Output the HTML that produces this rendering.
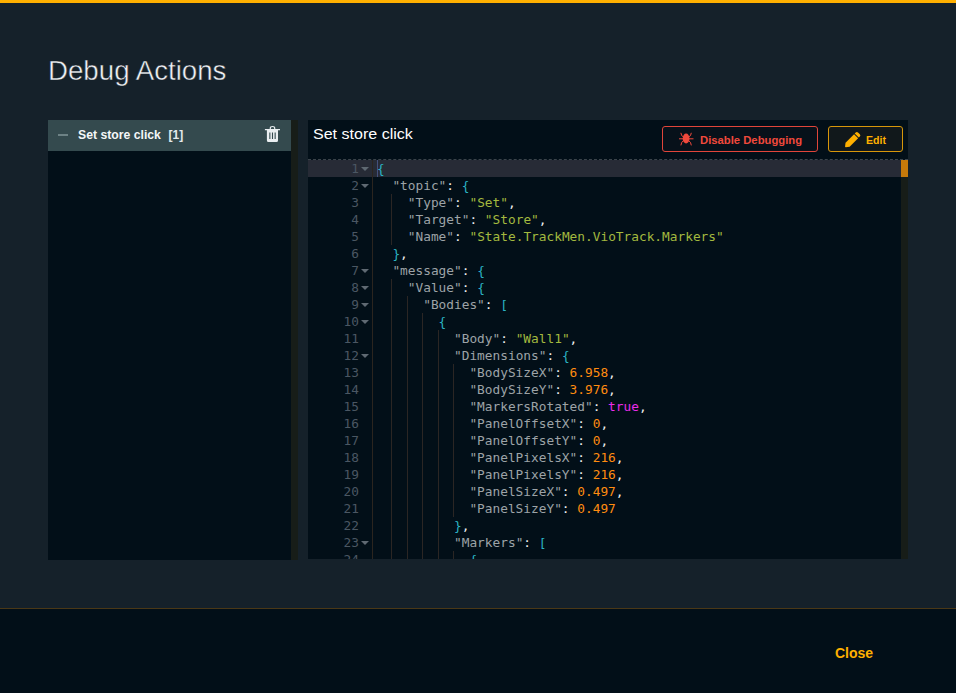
<!DOCTYPE html>
<html lang="en">
<head>
<meta charset="utf-8">
<title>Debug Actions</title>
<style>
*{box-sizing:border-box;margin:0;padding:0}
html,body{width:956px;height:693px;overflow:hidden}
body{background:#15212a;font-family:"Liberation Sans",sans-serif;color:#fff;position:relative;--cw:7.7px}
.topbar{position:absolute;left:0;top:0;width:956px;height:3px;background:#ffb000}
h1{position:absolute;left:48px;top:53px;font-weight:400;font-size:27.5px;line-height:36px;color:#eef1f4;white-space:nowrap;transform-origin:0 0;transform:scaleX(1.006);-webkit-text-stroke:0.45px #15212a}
.left{position:absolute;left:48px;top:120px;width:250px;height:440px;background:#020f18}
.left .track{position:absolute;right:0;top:0;width:7px;height:440px;background:#171d18}
.item{position:absolute;left:0;top:0;width:243px;height:31px;background:#344a4e}
.item .minus{position:absolute;left:10px;top:14px;width:10px;height:2px;background:#6d8285}
.item .lbl{position:absolute;left:29.500px;top:7px;font-weight:700;font-size:13px;line-height:16px;color:#f4f7f8;white-space:nowrap;transform-origin:0 0;transform:scaleX(0.94)}
.item .cnt{position:absolute;left:120.500px;top:7px;font-weight:700;font-size:12px;line-height:16px;color:#e4eaec;white-space:nowrap}
.item svg{position:absolute;left:216px;top:5px}
.right{position:absolute;left:308px;top:120px;width:600px;height:439px;background:#020f18;overflow:hidden}
.right .ttl{position:absolute;left:5px;top:3.500px;font-size:15.500px;line-height:20px;color:#fff;white-space:nowrap;transform-origin:0 0;transform:scaleX(1.035)}
.btn{position:absolute;top:6px;height:26px;border-radius:3px;font-weight:700;font-size:11.500px;line-height:24px;white-space:nowrap}
.btn.red{left:354px;width:156px;border:1px solid #e0453a;color:#f0493c;background:#07111a}
.btn.yel{left:520px;width:75px;border:1px solid #d6960a;color:#ffb000;background:#11181b}
.btn span{position:absolute;top:1px;transform-origin:0 0}
.btn svg{position:absolute}
.editor{position:absolute;left:0;top:39px;width:600px;height:401px;border-top:1px dashed #3b444b;font-family:"DejaVu Sans Mono","Liberation Mono",monospace;font-size:12.8px;overflow:hidden}
.gline{position:absolute;left:64px;top:0;width:1px;height:401px;background:#2b251f}
.vtrack{position:absolute;left:593px;top:0;width:7px;height:401px;background:#171d18}
.vthumb{position:absolute;left:593px;top:0;width:7px;height:17px;background:#c77a0a}
.row{position:absolute;left:0;width:593px;height:17px;line-height:17px;white-space:pre}
.row.act{background:#272b36}
.gut{position:absolute;left:0;top:0;width:64px;height:17px;color:#4b5763}
.ln{position:absolute;right:13px;top:0}
.fold{position:absolute;left:53px;top:7px;width:0;height:0;border-left:4.5px solid transparent;border-right:4.5px solid transparent;border-top:4.5px solid #5f6972}
.code{position:absolute;left:69px;top:0;height:17px;width:524px}
.g{position:absolute;top:0;width:1px;height:17px;background:#2b2624;margin-left:-1px}
.tx{position:absolute;left:0;top:0}
.k{color:#9da3a7}
.t{color:#eef0f1}
.s{color:#a3b93f}
.n{color:#ff8c10}
.b{color:#ea2cea}
.p{color:#2bb3c4}
.cursor{position:absolute;left:69px;top:0;width:1px;height:17px;background:#44507c}
.footer{position:absolute;left:0;top:608px;width:956px;height:85px;background:#020f18;border-top:1px solid #4a3816}
.close{position:absolute;left:835px;top:36px;font-weight:700;font-size:14px;line-height:16px;color:#ffb000}
</style>
</head>
<body>
<div class="topbar"></div>
<h1>Debug Actions</h1>
<div class="left">
  <div class="item">
    <div class="minus"></div>
    <div class="lbl">Set store click</div>
    <div class="cnt">[1]</div>
    <svg width="17" height="18" viewBox="0 0 17 18"><path fill="#e9eef0" fill-rule="evenodd" d="M0.900 3.900h15.100v1.400H0.900zM5.700 3.900V3.100a2.800 2.200 0 0 1 5.600 0v0.800h-1.200V3.300a1.600 1.200 0 0 0-3.200 0v0.600zM2.900 5.300h11.100v10.200a1.500 1.500 0 0 1-1.500 1.500H4.400a1.500 1.500 0 0 1-1.500-1.500zM5.300 7.600h1.100v6.300h-1.100zM7.950 7.600h1.100v6.300h-1.100zM10.600 7.600h1.100v6.300h-1.100z"/></svg>
  </div>
  <div class="track"></div>
</div>
<div class="right">
  <div class="ttl">Set store click</div>
  <div class="btn red"><svg width="15" height="14" viewBox="0 0 15 14" style="left:16px;top:5px"><ellipse cx="7.100" cy="6.500" rx="3.400" ry="5.100" fill="#f0493c"/><path d="M4.600 5l-1.900-1.400-0.700-2.400M9.600 5l1.900-1.400 0.700-2.400M0.100 6.800h14M4.600 8.600l-1.900 1.800-0.700 2.600M9.600 8.600l1.900 1.800 0.700 2.600" stroke="#f0493c" stroke-width="1" fill="none" stroke-linecap="round" stroke-linejoin="round"/></svg><span style="left:37px;transform:scaleX(0.98)">Disable Debugging</span></div>
  <div class="btn yel"><svg width="17" height="17" viewBox="0 0 17 17" style="left:16px;top:5px;overflow:visible"><g transform="translate(0.200 15.100) rotate(-45)" fill="#ffb000"><path d="M0.300 0.500Q-0.200 0 0.300-0.500L3.400-2.900H15.400V2.900H3.400Z"/><path d="M16.300-2.900H17.800a1.600 1.600 0 0 1 1.600 1.600V1.300a1.600 1.600 0 0 1-1.600 1.600H16.300Z"/></g></svg><span style="left:36.500px;transform:scaleX(0.92)">Edit</span></div>
  <div class="editor">
<div style="top:0px" class="row act"><div class="gut"><span class="ln">1</span><b class="fold"></b></div><div class="code"><span class="tx" style="margin-left:calc(var(--cw) * 0)"><span class="p">{</span></span></div></div>
<div style="top:17px" class="row"><div class="gut"><span class="ln">2</span><b class="fold"></b></div><div class="code"><span class="tx" style="margin-left:calc(var(--cw) * 2)"><span class="k">"topic"</span><span class="t">: </span><span class="p">{</span></span></div></div>
<div style="top:34px" class="row"><div class="gut"><span class="ln">3</span></div><div class="code"><i class="g" style="left:calc(var(--cw) * 2)"></i><span class="tx" style="margin-left:calc(var(--cw) * 4)"><span class="k">"Type"</span><span class="t">: </span><span class="s">"Set"</span><span class="t">,</span></span></div></div>
<div style="top:51px" class="row"><div class="gut"><span class="ln">4</span></div><div class="code"><i class="g" style="left:calc(var(--cw) * 2)"></i><span class="tx" style="margin-left:calc(var(--cw) * 4)"><span class="k">"Target"</span><span class="t">: </span><span class="s">"Store"</span><span class="t">,</span></span></div></div>
<div style="top:68px" class="row"><div class="gut"><span class="ln">5</span></div><div class="code"><i class="g" style="left:calc(var(--cw) * 2)"></i><span class="tx" style="margin-left:calc(var(--cw) * 4)"><span class="k">"Name"</span><span class="t">: </span><span class="s">"State.TrackMen.VioTrack.Markers"</span></span></div></div>
<div style="top:85px" class="row"><div class="gut"><span class="ln">6</span></div><div class="code"><span class="tx" style="margin-left:calc(var(--cw) * 2)"><span class="p">}</span><span class="t">,</span></span></div></div>
<div style="top:102px" class="row"><div class="gut"><span class="ln">7</span><b class="fold"></b></div><div class="code"><span class="tx" style="margin-left:calc(var(--cw) * 2)"><span class="k">"message"</span><span class="t">: </span><span class="p">{</span></span></div></div>
<div style="top:119px" class="row"><div class="gut"><span class="ln">8</span><b class="fold"></b></div><div class="code"><i class="g" style="left:calc(var(--cw) * 2)"></i><span class="tx" style="margin-left:calc(var(--cw) * 4)"><span class="k">"Value"</span><span class="t">: </span><span class="p">{</span></span></div></div>
<div style="top:136px" class="row"><div class="gut"><span class="ln">9</span><b class="fold"></b></div><div class="code"><i class="g" style="left:calc(var(--cw) * 2)"></i><i class="g" style="left:calc(var(--cw) * 4)"></i><span class="tx" style="margin-left:calc(var(--cw) * 6)"><span class="k">"Bodies"</span><span class="t">: </span><span class="p">[</span></span></div></div>
<div style="top:153px" class="row"><div class="gut"><span class="ln">10</span><b class="fold"></b></div><div class="code"><i class="g" style="left:calc(var(--cw) * 2)"></i><i class="g" style="left:calc(var(--cw) * 4)"></i><i class="g" style="left:calc(var(--cw) * 6)"></i><span class="tx" style="margin-left:calc(var(--cw) * 8)"><span class="p">{</span></span></div></div>
<div style="top:170px" class="row"><div class="gut"><span class="ln">11</span></div><div class="code"><i class="g" style="left:calc(var(--cw) * 2)"></i><i class="g" style="left:calc(var(--cw) * 4)"></i><i class="g" style="left:calc(var(--cw) * 6)"></i><i class="g" style="left:calc(var(--cw) * 8)"></i><span class="tx" style="margin-left:calc(var(--cw) * 10)"><span class="k">"Body"</span><span class="t">: </span><span class="s">"Wall1"</span><span class="t">,</span></span></div></div>
<div style="top:187px" class="row"><div class="gut"><span class="ln">12</span><b class="fold"></b></div><div class="code"><i class="g" style="left:calc(var(--cw) * 2)"></i><i class="g" style="left:calc(var(--cw) * 4)"></i><i class="g" style="left:calc(var(--cw) * 6)"></i><i class="g" style="left:calc(var(--cw) * 8)"></i><span class="tx" style="margin-left:calc(var(--cw) * 10)"><span class="k">"Dimensions"</span><span class="t">: </span><span class="p">{</span></span></div></div>
<div style="top:204px" class="row"><div class="gut"><span class="ln">13</span></div><div class="code"><i class="g" style="left:calc(var(--cw) * 2)"></i><i class="g" style="left:calc(var(--cw) * 4)"></i><i class="g" style="left:calc(var(--cw) * 6)"></i><i class="g" style="left:calc(var(--cw) * 8)"></i><i class="g" style="left:calc(var(--cw) * 10)"></i><span class="tx" style="margin-left:calc(var(--cw) * 12)"><span class="k">"BodySizeX"</span><span class="t">: </span><span class="n">6.958</span><span class="t">,</span></span></div></div>
<div style="top:221px" class="row"><div class="gut"><span class="ln">14</span></div><div class="code"><i class="g" style="left:calc(var(--cw) * 2)"></i><i class="g" style="left:calc(var(--cw) * 4)"></i><i class="g" style="left:calc(var(--cw) * 6)"></i><i class="g" style="left:calc(var(--cw) * 8)"></i><i class="g" style="left:calc(var(--cw) * 10)"></i><span class="tx" style="margin-left:calc(var(--cw) * 12)"><span class="k">"BodySizeY"</span><span class="t">: </span><span class="n">3.976</span><span class="t">,</span></span></div></div>
<div style="top:238px" class="row"><div class="gut"><span class="ln">15</span></div><div class="code"><i class="g" style="left:calc(var(--cw) * 2)"></i><i class="g" style="left:calc(var(--cw) * 4)"></i><i class="g" style="left:calc(var(--cw) * 6)"></i><i class="g" style="left:calc(var(--cw) * 8)"></i><i class="g" style="left:calc(var(--cw) * 10)"></i><span class="tx" style="margin-left:calc(var(--cw) * 12)"><span class="k">"MarkersRotated"</span><span class="t">: </span><span class="b">true</span><span class="t">,</span></span></div></div>
<div style="top:255px" class="row"><div class="gut"><span class="ln">16</span></div><div class="code"><i class="g" style="left:calc(var(--cw) * 2)"></i><i class="g" style="left:calc(var(--cw) * 4)"></i><i class="g" style="left:calc(var(--cw) * 6)"></i><i class="g" style="left:calc(var(--cw) * 8)"></i><i class="g" style="left:calc(var(--cw) * 10)"></i><span class="tx" style="margin-left:calc(var(--cw) * 12)"><span class="k">"PanelOffsetX"</span><span class="t">: </span><span class="n">0</span><span class="t">,</span></span></div></div>
<div style="top:272px" class="row"><div class="gut"><span class="ln">17</span></div><div class="code"><i class="g" style="left:calc(var(--cw) * 2)"></i><i class="g" style="left:calc(var(--cw) * 4)"></i><i class="g" style="left:calc(var(--cw) * 6)"></i><i class="g" style="left:calc(var(--cw) * 8)"></i><i class="g" style="left:calc(var(--cw) * 10)"></i><span class="tx" style="margin-left:calc(var(--cw) * 12)"><span class="k">"PanelOffsetY"</span><span class="t">: </span><span class="n">0</span><span class="t">,</span></span></div></div>
<div style="top:289px" class="row"><div class="gut"><span class="ln">18</span></div><div class="code"><i class="g" style="left:calc(var(--cw) * 2)"></i><i class="g" style="left:calc(var(--cw) * 4)"></i><i class="g" style="left:calc(var(--cw) * 6)"></i><i class="g" style="left:calc(var(--cw) * 8)"></i><i class="g" style="left:calc(var(--cw) * 10)"></i><span class="tx" style="margin-left:calc(var(--cw) * 12)"><span class="k">"PanelPixelsX"</span><span class="t">: </span><span class="n">216</span><span class="t">,</span></span></div></div>
<div style="top:306px" class="row"><div class="gut"><span class="ln">19</span></div><div class="code"><i class="g" style="left:calc(var(--cw) * 2)"></i><i class="g" style="left:calc(var(--cw) * 4)"></i><i class="g" style="left:calc(var(--cw) * 6)"></i><i class="g" style="left:calc(var(--cw) * 8)"></i><i class="g" style="left:calc(var(--cw) * 10)"></i><span class="tx" style="margin-left:calc(var(--cw) * 12)"><span class="k">"PanelPixelsY"</span><span class="t">: </span><span class="n">216</span><span class="t">,</span></span></div></div>
<div style="top:323px" class="row"><div class="gut"><span class="ln">20</span></div><div class="code"><i class="g" style="left:calc(var(--cw) * 2)"></i><i class="g" style="left:calc(var(--cw) * 4)"></i><i class="g" style="left:calc(var(--cw) * 6)"></i><i class="g" style="left:calc(var(--cw) * 8)"></i><i class="g" style="left:calc(var(--cw) * 10)"></i><span class="tx" style="margin-left:calc(var(--cw) * 12)"><span class="k">"PanelSizeX"</span><span class="t">: </span><span class="n">0.497</span><span class="t">,</span></span></div></div>
<div style="top:340px" class="row"><div class="gut"><span class="ln">21</span></div><div class="code"><i class="g" style="left:calc(var(--cw) * 2)"></i><i class="g" style="left:calc(var(--cw) * 4)"></i><i class="g" style="left:calc(var(--cw) * 6)"></i><i class="g" style="left:calc(var(--cw) * 8)"></i><i class="g" style="left:calc(var(--cw) * 10)"></i><span class="tx" style="margin-left:calc(var(--cw) * 12)"><span class="k">"PanelSizeY"</span><span class="t">: </span><span class="n">0.497</span></span></div></div>
<div style="top:357px" class="row"><div class="gut"><span class="ln">22</span></div><div class="code"><i class="g" style="left:calc(var(--cw) * 2)"></i><i class="g" style="left:calc(var(--cw) * 4)"></i><i class="g" style="left:calc(var(--cw) * 6)"></i><i class="g" style="left:calc(var(--cw) * 8)"></i><span class="tx" style="margin-left:calc(var(--cw) * 10)"><span class="p">}</span><span class="t">,</span></span></div></div>
<div style="top:374px" class="row"><div class="gut"><span class="ln">23</span><b class="fold"></b></div><div class="code"><i class="g" style="left:calc(var(--cw) * 2)"></i><i class="g" style="left:calc(var(--cw) * 4)"></i><i class="g" style="left:calc(var(--cw) * 6)"></i><i class="g" style="left:calc(var(--cw) * 8)"></i><span class="tx" style="margin-left:calc(var(--cw) * 10)"><span class="k">"Markers"</span><span class="t">: </span><span class="p">[</span></span></div></div>
<div style="top:391px" class="row"><div class="gut"><span class="ln">24</span></div><div class="code"><i class="g" style="left:calc(var(--cw) * 2)"></i><i class="g" style="left:calc(var(--cw) * 4)"></i><i class="g" style="left:calc(var(--cw) * 6)"></i><i class="g" style="left:calc(var(--cw) * 8)"></i><i class="g" style="left:calc(var(--cw) * 10)"></i><span class="tx" style="margin-left:calc(var(--cw) * 12)"><span class="p">{</span></span></div></div>
    <div class="gline"></div>
    <div class="cursor"></div>
    <div class="vtrack"></div>
    <div class="vthumb"></div>
  </div>
</div>
<div class="footer"><div class="close">Close</div></div>
</body>
</html>
